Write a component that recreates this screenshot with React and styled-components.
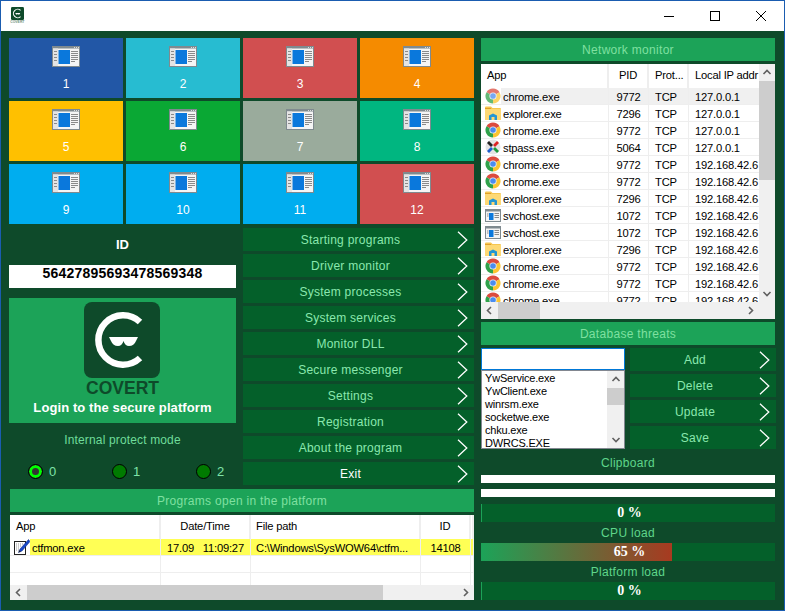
import styled, { createGlobalStyle } from "styled-components";

const GlobalStyle = createGlobalStyle`
  html, body {
    margin: 0;
    padding: 0;
    background: #fff;
  }
  * {
    box-sizing: border-box;
  }
`;

const tiles = [
  "#2257a6", "#27bcd1", "#d14f50", "#f58b00",
  "#ffc000", "#0aa834", "#9aab9c", "#00b680",
  "#00adef", "#00adef", "#00adef", "#d14f50",
];

const menu = [
  "Starting programs", "Driver monitor", "System processes", "System services",
  "Monitor DLL", "Secure messenger", "Settings", "Registration", "About the program",
];

const netRows = [
  ["chrome", "chrome.exe", "9772", "127.0.0.1"],
  ["folder", "explorer.exe", "7296", "127.0.0.1"],
  ["chrome", "chrome.exe", "9772", "127.0.0.1"],
  ["pass", "stpass.exe", "5064", "127.0.0.1"],
  ["chrome", "chrome.exe", "9772", "192.168.42.6"],
  ["chrome", "chrome.exe", "9772", "192.168.42.6"],
  ["folder", "explorer.exe", "7296", "192.168.42.6"],
  ["svc", "svchost.exe", "1072", "192.168.42.6"],
  ["svc", "svchost.exe", "1072", "192.168.42.6"],
  ["folder", "explorer.exe", "7296", "192.168.42.6"],
  ["chrome", "chrome.exe", "9772", "192.168.42.6"],
  ["chrome", "chrome.exe", "9772", "192.168.42.6"],
  ["chrome", "chrome.exe", "9772", "192.168.42.6"],
];

const threats = ["YwService.exe", "YwClient.exe", "winrsm.exe", "socketwe.exe", "chku.exe", "DWRCS.EXE"];

const NET_COLS = "128px 40px 40px 1fr";
const OPEN_COLS = "151px 90px 170px 50px 1fr";

const LogoMark = ({ size }) => (
  <svg width={size} height={size} viewBox="0 0 76 76">
    <rect width="76" height="76" rx="8" fill="#0e4a2a" />
    <path d="M56 20A24.7 24.7 0 1 0 56 56" fill="none" stroke="#fff" strokeWidth="6.5" />
    <path d="M25 35H54L52 39Q50 44 45 44Q41 44 39.5 39Q38 44 34 44Q29 44 27 39Z" fill="#fff" />
  </svg>
);

const TileIcon = () => (
  <svg width="28" height="21" viewBox="0 0 28 21">
    <rect width="28" height="21" fill="#7f8a8f" />
    <rect x="1" y="2.5" width="26" height="17.5" fill="#f5f5f5" />
    <rect x="1" y="2.5" width="5" height="17.5" fill="#e4e4e4" />
    <rect x="22" y="1" width="1" height="1" fill="#ddd" />
    <rect x="24" y="1" width="1" height="1" fill="#ddd" />
    <rect x="26" y="1" width="1" height="1" fill="#ddd" />
    <path d="M2 5.5h3M2 8.5h3M2 11.5h3M2 14.5h3" stroke="#8a8a8a" strokeWidth="1" />
    <rect x="6.5" y="4" width="11.5" height="14" fill="#0a78dc" />
    <path d="M19 5.5h7M19 7.5h7M19 9.5h7M19 11.5h7M19 13.5h7M19 15.5h4" stroke="#8a8a8a" strokeWidth="1" />
  </svg>
);

const ChromeIcon = () => (
  <svg width="16" height="16" viewBox="0 0 16 16">
    <path d="M8 8L1.5 4.25A7.5 7.5 0 0 1 14.5 4.25Z" fill="#dc4b3e" />
    <path d="M8 8L14.5 4.25A7.5 7.5 0 0 1 8 15.5Z" fill="#fbc531" />
    <path d="M8 8L8 15.5A7.5 7.5 0 0 1 1.5 4.25Z" fill="#2fa24a" />
    <circle cx="8" cy="8" r="3.6" fill="#e9eef5" />
    <circle cx="8" cy="8" r="2.8" fill="#4a8cf0" />
  </svg>
);

const FolderIcon = () => (
  <svg width="16" height="15" viewBox="0 0 16 15">
    <path d="M0 1.5A1 1 0 0 1 1 .5H6L7.5 2H15A1 1 0 0 1 16 3V14H0Z" fill="#f6c650" />
    <rect x="0" y="3" width="16" height="11" fill="#fdd975" />
    <path d="M4 14V9.5L8 7.5L12 9.5V14H9.5V11H6.5V14Z" fill="#2396d4" />
    <rect x="0" y="2" width="6" height="1" fill="#dfa02a" />
  </svg>
);

const PassIcon = () => (
  <svg width="16" height="16" viewBox="0 0 16 16">
    <circle cx="8" cy="8" r="7.5" fill="#e4e4e4" />
    <path d="M3 3L7 7" stroke="#222" strokeWidth="2.8" />
    <path d="M13 3L9 7" stroke="#d22" strokeWidth="2.8" />
    <path d="M3 13L7 9" stroke="#1b5fd0" strokeWidth="2.8" />
    <path d="M13 13L9 9" stroke="#1a9a3a" strokeWidth="2.8" />
  </svg>
);

const SvcIcon = () => (
  <svg width="16" height="13" viewBox="0 0 16 13">
    <rect x=".5" y=".5" width="15" height="12" fill="#f4f4f4" stroke="#7f8a8f" />
    <rect x="1" y="1" width="14" height="1.5" fill="#7f8a8f" />
    <rect x="4" y="4" width="4.5" height="7" fill="#0a78dc" />
    <path d="M9.5 4.5h4.5M9.5 6.5h4.5M9.5 8.5h4.5M2 5h1.5M2 7h1.5" stroke="#8a8a8a" strokeWidth="1" />
  </svg>
);

const NoteIcon = () => (
  <svg width="16" height="16" viewBox="0 0 16 16">
    <rect x=".5" y="2.5" width="11" height="13" fill="#fff" stroke="#222" />
    <path d="M2 5h8M2 7h5M2 9h4M2 11h3" stroke="#999" strokeWidth="1" strokeDasharray="1 1" />
    <path d="M14.5 .5L6 10L4.5 13.5L8 12L16 2.5Z" fill="#1746c8" stroke="#0c2a80" strokeWidth=".5" />
    <path d="M4.5 13.5L5.4 11.2L6.9 12.5Z" fill="#222" />
  </svg>
);

const appIcons = {
  chrome: <ChromeIcon />,
  folder: <FolderIcon />,
  pass: <PassIcon />,
  svc: <SvcIcon />,
  note: <NoteIcon />,
};

const Chevron = () => (
  <ChevronBox width="11" height="18" viewBox="0 0 11 18">
    <path d="M1 .8L9.8 9L1 17.2" fill="none" stroke="#fff" strokeWidth="1.3" />
  </ChevronBox>
);

const arrowPaths = {
  up: "M1.5 6L5 2.5L8.5 6",
  down: "M1.5 3L5 6.5L8.5 3",
  left: "M6 1L2.5 4.5L6 8",
  right: "M3 1L6.5 4.5L3 8",
};

const ArrowBtn = ({ dir }) => (
  <ArrowBox>
    <svg width="10" height="9" viewBox="0 0 10 9">
      <path d={arrowPaths[dir]} fill="none" stroke="#606060" strokeWidth="1.6" />
    </svg>
  </ArrowBox>
);

const VBar = ({ top, size, width }) => (
  <VTrack $width={width}>
    <ArrowBtn dir="up" />
    <VSpace>
      <VThumb $top={top} $size={size} />
    </VSpace>
    <ArrowBtn dir="down" />
  </VTrack>
);

const HBar = ({ left, size, height }) => (
  <HTrack $height={height}>
    <ArrowBtn dir="left" />
    <HSpace>
      <HThumb $left={left} $size={size} />
    </HSpace>
    <ArrowBtn dir="right" />
  </HTrack>
);

const MenuButton = ({ label, white }) => (
  <Action $white={white}>
    <ActionLabel>{label}</ActionLabel>
    <Chevron />
  </Action>
);

const Meter = ({ value }) => (
  <MeterTrack>
    <MeterFill style={{ width: value ? `${value}%` : "1px" }} $hot={value > 0} />
    <MeterText>{value} %</MeterText>
  </MeterTrack>
);

const App = () => (
  <>
    <GlobalStyle />
    <Win>
      <TitleBar>
        <TitleIcon>
          <LogoMark size={13} />
          <TitleIconText>COVERT</TitleIconText>
        </TitleIcon>
        <WinButtons>
          <WinButton>
            <svg width="10" height="10" viewBox="0 0 10 10"><path d="M0 5.5H10" stroke="#000" /></svg>
          </WinButton>
          <WinButton>
            <svg width="10" height="10" viewBox="0 0 10 10"><rect x=".5" y=".5" width="9" height="9" fill="none" stroke="#000" /></svg>
          </WinButton>
          <WinButton>
            <svg width="10" height="10" viewBox="0 0 10 10"><path d="M0 0L10 10M10 0L0 10" stroke="#000" /></svg>
          </WinButton>
        </WinButtons>
      </TitleBar>

      <Body>
        <LeftCol>
          <TileGrid>
            {tiles.map((color, i) => (
              <Tile key={i} $color={color}>
                <TileIcon />
                <TileNumber>{i + 1}</TileNumber>
              </Tile>
            ))}
          </TileGrid>

          <MidRow>
            <IdCol>
              <IdLabel>ID</IdLabel>
              <IdValue>56427895693478569348</IdValue>
              <LoginPanel>
                <LogoSlot>
                  <LogoMark size={76} />
                </LogoSlot>
                <BrandName>COVERT</BrandName>
                <LoginText>Login to the secure platform</LoginText>
              </LoginPanel>
              <ProtectLabel>Internal protect mode</ProtectLabel>
              <RadioRow>
                {[0, 1, 2].map((n) => (
                  <RadioItem key={n}>
                    <RadioDot $on={n === 0} />
                    <span>{n}</span>
                  </RadioItem>
                ))}
              </RadioRow>
            </IdCol>
            <MenuCol>
              {menu.map((m) => (
                <MenuButton key={m} label={m} />
              ))}
              <MenuButton label="Exit" white />
            </MenuCol>
          </MidRow>

          <OpenSection>
            <Heading>Programs open in the platform</Heading>
            <OpenTable>
              <ViewPort>
                <HeadRow $cols={OPEN_COLS}>
                  <HeadCell $pad={6}>App</HeadCell>
                  <HeadCell $center>Date/Time</HeadCell>
                  <HeadCell $pad={5}>File path</HeadCell>
                  <HeadCell $center>ID</HeadCell>
                  <HeadCell />
                </HeadRow>
                <Row $cols={OPEN_COLS} $fill="#ffff55" $fillFrom={20}>
                  <AppCell>
                    <IconSlot $w={16} $ml={4}>{appIcons.note}</IconSlot>
                    <span>ctfmon.exe</span>
                  </AppCell>
                  <Cell $center>17.09&nbsp;&nbsp;&nbsp;11:09:27</Cell>
                  <Cell $pad={5}>C:\Windows\SysWOW64\ctfm...</Cell>
                  <Cell $center>14108</Cell>
                  <Cell />
                </Row>
                {[0, 1].map((i) => (
                  <Row key={i} $cols={OPEN_COLS}>
                    <Cell /><Cell /><Cell /><Cell /><Cell />
                  </Row>
                ))}
              </ViewPort>
              <OpenBottom>
                <HBar left={0} size={356} height={15} />
              </OpenBottom>
            </OpenTable>
          </OpenSection>
        </LeftCol>

        <RightCol>
          <Heading>Network monitor</Heading>
          <NetTable>
            <NetView>
              <ViewPort>
                <HeadRow $cols={NET_COLS}>
                  <HeadCell $pad={6}>App</HeadCell>
                  <HeadCell $center>PID</HeadCell>
                  <HeadCell $pad={6}>Prot...</HeadCell>
                  <HeadCell $pad={6} $last>Local IP addr</HeadCell>
                </HeadRow>
                {netRows.map((r, i) => (
                  <Row key={i} $cols={NET_COLS} $fill={i === 0 ? "#f0f0f0" : undefined} $fillFrom={20}>
                    <AppCell>
                      <IconSlot $w={16} $ml={4} $dim={i === 0}>{appIcons[r[0]]}</IconSlot>
                      <span>{r[1]}</span>
                    </AppCell>
                    <Cell $center>{r[2]}</Cell>
                    <Cell $pad={6}>TCP</Cell>
                    <Cell $pad={6} $last>{r[3]}</Cell>
                  </Row>
                ))}
              </ViewPort>
              <VBar top={0} size={99} width={16} />
            </NetView>
            <OpenBottom>
              <HBar left={0} size={42} height={17} />
              <Corner />
            </OpenBottom>
          </NetTable>

          <Heading>Database threats</Heading>
          <ThreatRow>
            <ThreatCol>
              <ThreatInput />
              <ThreatList>
                <ThreatItems>
                  {threats.map((t) => (
                    <ThreatItem key={t}>{t}</ThreatItem>
                  ))}
                </ThreatItems>
                <VBar top={0} size={17} width={17} />
              </ThreatList>
            </ThreatCol>
            <ThreatButtons>
              {["Add", "Delete", "Update", "Save"].map((b) => (
                <MenuButton key={b} label={b} />
              ))}
            </ThreatButtons>
          </ThreatRow>

          <StatSection>
            <StatLabel $h={26} $pt={1}>Clipboard</StatLabel>
            <ClipLine />
            <ClipLine $mt={6} />
            <MeterGap />
            <Meter value={0} />
            <StatLabel $h={21}>CPU load</StatLabel>
            <Meter value={65} />
            <StatLabel $h={21}>Platform load</StatLabel>
            <Meter value={0} />
          </StatSection>
        </RightCol>
      </Body>
    </Win>
  </>
);

export default App;

const Win = styled.div`
  width: 785px;
  height: 611px;
  display: flex;
  flex-direction: column;
  border: 1px solid #1a5cb0;
  background: #0e4a2a;
  overflow: hidden;
  font-family: "Liberation Sans", Arial, sans-serif;
`;

const TitleBar = styled.div`
  height: 30px;
  flex: none;
  background: #fff;
  display: flex;
  justify-content: space-between;
`;

const TitleIcon = styled.div`
  margin: 6px 0 0 10px;
  width: 13px;
  display: flex;
  flex-direction: column;
  align-items: center;
  svg {
    display: block;
  }
`;

const TitleIconText = styled.span`
  font-size: 4px;
  line-height: 4px;
  font-weight: 700;
  color: #6f8f7d;
  transform: scaleX(0.85);
`;

const WinButtons = styled.div`
  display: flex;
`;

const WinButton = styled.div`
  width: 46px;
  height: 30px;
  display: flex;
  align-items: center;
  justify-content: center;
  svg {
    display: block;
  }
`;

const Body = styled.div`
  flex: 1;
  display: flex;
  gap: 7px;
  padding: 7px 0 0 8px;
`;

const LeftCol = styled.div`
  width: 465px;
  display: flex;
  flex-direction: column;
`;

const RightCol = styled.div`
  width: 295px;
  display: flex;
  flex-direction: column;
  gap: 3px;
`;

const TileGrid = styled.div`
  display: grid;
  grid-template-columns: repeat(4, 114px);
  grid-auto-rows: 60px;
  gap: 3px;
`;

const Tile = styled.div`
  background: ${(p) => p.$color};
  display: flex;
  flex-direction: column;
  align-items: center;
  padding-top: 8px;
  svg {
    display: block;
  }
`;

const TileNumber = styled.div`
  margin-top: 10px;
  font-size: 12px;
  line-height: 14px;
  color: #fff;
`;

const MidRow = styled.div`
  display: flex;
  gap: 7px;
`;

const IdCol = styled.div`
  width: 227px;
  display: flex;
  flex-direction: column;
`;

const IdLabel = styled.div`
  height: 41px;
  display: flex;
  align-items: center;
  justify-content: center;
  color: #fff;
  font-size: 13px;
  font-weight: 700;
`;

const IdValue = styled.div`
  height: 23px;
  background: #fff;
  color: #000;
  font-size: 14px;
  font-weight: 700;
  letter-spacing: 0.22px;
  text-align: center;
  line-height: 17px;
`;

const LoginPanel = styled.div`
  margin-top: 10px;
  height: 125px;
  background: #1ca358;
  display: flex;
  flex-direction: column;
  align-items: center;
  padding-top: 4px;
`;

const LogoSlot = styled.div`
  flex: none;
  margin-right: 1px;
  svg {
    display: block;
  }
`;

const BrandName = styled.div`
  height: 20px;
  line-height: 21px;
  font-size: 17.5px;
  font-weight: 700;
  color: #0e4a2a;
`;

const LoginText = styled.div`
  height: 19px;
  line-height: 19px;
  font-size: 13px;
  font-weight: 700;
  color: #fff;
  letter-spacing: 0.1px;
`;

const ProtectLabel = styled.div`
  height: 34px;
  display: flex;
  align-items: center;
  justify-content: center;
  font-size: 12px;
  letter-spacing: 0.15px;
  color: #6fdc9a;
`;

const RadioRow = styled.div`
  height: 28px;
  display: grid;
  grid-template-columns: repeat(3, 84px);
  padding-left: 19px;
  align-items: center;
`;

const RadioItem = styled.div`
  display: flex;
  align-items: center;
  gap: 6px;
  font-size: 13px;
  color: #7fe3a8;
`;

const RadioDot = styled.div`
  width: 15px;
  height: 15px;
  border-radius: 50%;
  border: 1px solid #000;
  background: ${(p) => (p.$on ? "#333" : "#007a00")};
  box-shadow: ${(p) => (p.$on ? "inset 0 0 0 3px #00ff00" : "none")};
`;

const MenuCol = styled.div`
  width: 231px;
  margin-top: 4px;
  display: flex;
  flex-direction: column;
  gap: 3px;
`;

const Action = styled.div`
  height: 23px;
  background: #04602a;
  color: ${(p) => (p.$white ? "#fff" : "#8ae8ae")};
  display: flex;
  align-items: center;
  padding-right: 6px;
`;

const ActionLabel = styled.div`
  flex: 1;
  padding-left: 1px;
  text-align: center;
  font-size: 12px;
  letter-spacing: 0.25px;
`;

const ChevronBox = styled.svg`
  display: block;
  flex: none;
`;

const OpenSection = styled.div`
  margin: 4px 0 0 1px;
  display: flex;
  flex-direction: column;
  gap: 3px;
`;

const Heading = styled.div`
  width: 100%;
  max-width: 294px;
  height: 23px;
  background: #1ca358;
  color: #7fe0a0;
  font-size: 12px;
  letter-spacing: 0.3px;
  display: flex;
  align-items: center;
  justify-content: center;
  ${OpenSection} > & {
    max-width: none;
  }
`;

const OpenTable = styled.div`
  height: 85px;
  background: #fff;
  display: flex;
  flex-direction: column;
`;

const OpenBottom = styled.div`
  display: flex;
  flex: none;
`;

const NetTable = styled.div`
  width: 294px;
  height: 255px;
  background: #fff;
  display: flex;
  flex-direction: column;
`;

const NetView = styled.div`
  flex: 1;
  min-height: 0;
  display: flex;
`;

const Corner = styled.div`
  width: 16px;
  background: #f0f0f0;
`;

const ViewPort = styled.div`
  flex: 1;
  min-width: 0;
  min-height: 0;
  overflow: hidden;
  font-size: 11.2px;
  letter-spacing: -0.2px;
  color: #000;
`;

const HeadRow = styled.div`
  display: grid;
  grid-template-columns: ${(p) => p.$cols};
  height: 24px;
`;

const HeadCell = styled.div`
  border-right: ${(p) => (p.$last ? "none" : "2px solid #eeeeee")};
  padding-left: ${(p) => p.$pad || 0}px;
  text-align: ${(p) => (p.$center ? "center" : "left")};
  line-height: 23px;
  white-space: nowrap;
  overflow: hidden;
`;

const Row = styled.div`
  display: grid;
  grid-template-columns: ${(p) => p.$cols};
  height: 17px;
  border-bottom: 1px solid #eeeeee;
  background: ${(p) =>
    p.$fill
      ? `linear-gradient(to right, #fff ${p.$fillFrom}px, ${p.$fill} ${p.$fillFrom}px)`
      : "#fff"};
`;

const Cell = styled.div`
  border-right: ${(p) => (p.$last ? "none" : "1px solid #eeeeee")};
  padding-left: ${(p) => p.$pad || 0}px;
  text-align: ${(p) => (p.$center ? "center" : "left")};
  line-height: 18px;
  white-space: nowrap;
  overflow: hidden;
`;

const AppCell = styled(Cell)`
  display: flex;
  align-items: center;
  span {
    margin-left: 2px;
    padding-top: 1px;
  }
`;

const IconSlot = styled.div`
  width: ${(p) => p.$w}px;
  margin-left: ${(p) => p.$ml}px;
  flex: none;
  display: flex;
  align-items: center;
  justify-content: center;
  opacity: ${(p) => (p.$dim ? 0.75 : 1)};
  svg {
    display: block;
  }
`;

const VTrack = styled.div`
  width: ${(p) => p.$width}px;
  flex: none;
  background: #f0f0f0;
  display: flex;
  flex-direction: column;
`;

const VSpace = styled.div`
  flex: 1;
  min-height: 0;
`;

const VThumb = styled.div`
  margin-top: ${(p) => p.$top}px;
  height: ${(p) => p.$size}px;
  background: #cdcdcd;
`;

const HTrack = styled.div`
  flex: 1;
  height: ${(p) => p.$height}px;
  background: #f0f0f0;
  display: flex;
`;

const HSpace = styled.div`
  flex: 1;
  min-width: 0;
  display: flex;
`;

const HThumb = styled.div`
  margin-left: ${(p) => p.$left}px;
  width: ${(p) => p.$size}px;
  background: #cdcdcd;
`;

const ArrowBox = styled.div`
  flex: none;
  width: 17px;
  height: 17px;
  max-height: 100%;
  display: flex;
  align-items: center;
  justify-content: center;
  ${VTrack} & {
    width: 100%;
  }
  svg {
    display: block;
  }
`;

const ThreatRow = styled.div`
  display: grid;
  grid-template-columns: 144px 146px;
  gap: 5px;
`;

const ThreatCol = styled.div`
  display: flex;
  flex-direction: column;
`;

const ThreatInput = styled.div`
  height: 22px;
  background: #fff;
  border: 1px solid #0078d7;
`;

const ThreatList = styled.div`
  height: 79px;
  background: #fff;
  border: 1px solid #828790;
  display: flex;
`;

const ThreatItems = styled.div`
  flex: 1;
  min-width: 0;
  padding: 1px 0 0 3px;
  overflow: hidden;
`;

const ThreatItem = styled.div`
  font-size: 11px;
  letter-spacing: -0.2px;
  line-height: 13px;
  color: #000;
`;

const ThreatButtons = styled.div`
  display: flex;
  flex-direction: column;
  gap: 3px;
`;

const StatSection = styled.div`
  margin-top: -3px;
  width: 294px;
  display: flex;
  flex-direction: column;
`;

const StatLabel = styled.div`
  height: ${(p) => p.$h}px;
  padding-top: ${(p) => p.$pt || 0}px;
  display: flex;
  align-items: center;
  justify-content: center;
  font-size: 12px;
  letter-spacing: 0.3px;
  color: #5fd68a;
`;

const ClipLine = styled.div`
  height: 8px;
  flex: none;
  background: #fff;
  margin-top: ${(p) => p.$mt || 0}px;
`;

const MeterGap = styled.div`
  height: 7px;
  flex: none;
`;

const MeterTrack = styled.div`
  position: relative;
  height: 18px;
  flex: none;
  background: #04602a;
`;

const MeterFill = styled.div`
  height: 100%;
  background: ${(p) => (p.$hot ? "linear-gradient(to right, #1ca358, #a83a20)" : "#1ca358")};
`;

const MeterText = styled.div`
  position: absolute;
  inset: 0;
  padding-left: 3px;
  display: flex;
  align-items: center;
  justify-content: center;
  font-family: "Liberation Serif", "Times New Roman", serif;
  font-size: 14px;
  font-weight: 700;
  color: #fff;
`;
